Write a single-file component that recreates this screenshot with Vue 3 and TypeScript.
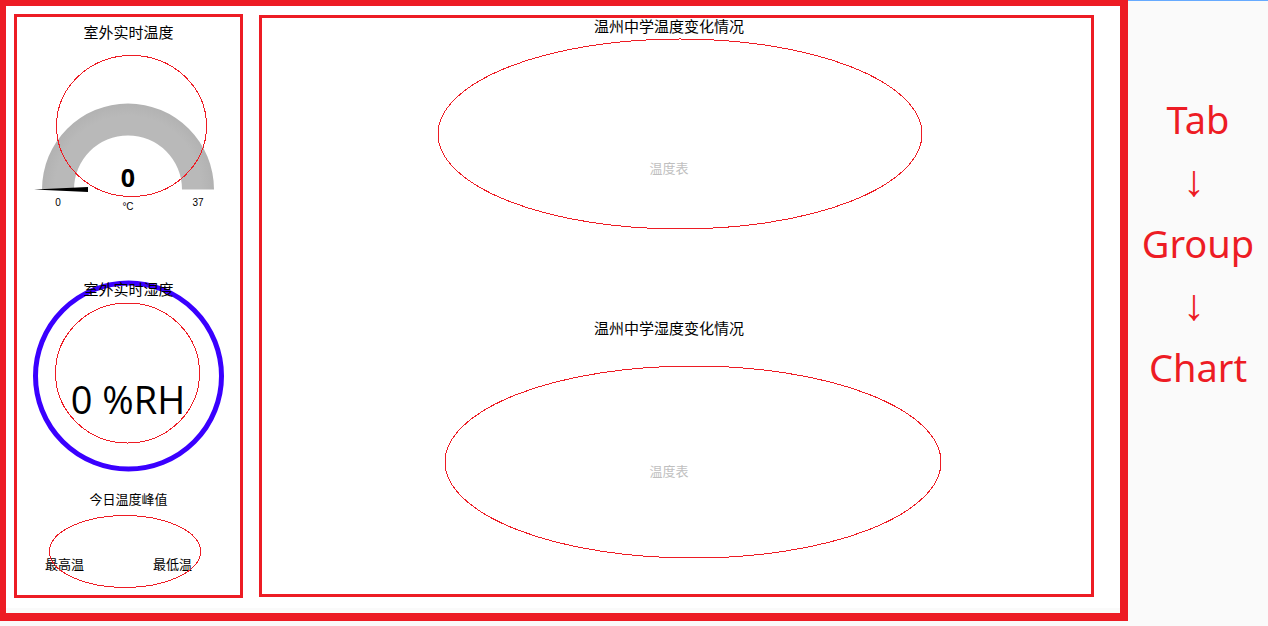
<script setup lang="ts">
interface Chart {
  title: string
  label: string
  height: number
  labelY: number
  ring: { cx: number; cy: number; rx: number; ry: number }
}

const charts: Chart[] = [
  { title: '温州中学温度变化情况', label: '温度表', height: 287, labelY: 140, ring: { cx: 291, cy: 101, rx: 242, ry: 95 } },
  { title: '温州中学湿度变化情况', label: '温度表', height: 259, labelY: 141, ring: { cx: 304, cy: 127, rx: 248, ry: 96 } },
]

const gauge = { value: 0, min: 0, max: 37, unit: '°C' }
const humidity = '0 %RH'
const legend: string[] = ['Tab', '↓', 'Group', '↓', 'Chart']
</script>

<template>
  <div class="page">
    <main class="tab">
      <div class="board">
        <section class="group readings">
          <h2>室外实时温度</h2>
          <svg class="gauge" viewBox="0 0 223 240" width="223" height="240">
            <defs>
              <radialGradient id="arc-shade" gradientUnits="userSpaceOnUse" cx="111" cy="149" r="86">
                <stop offset="0.62" stop-color="#b9b9b9" />
                <stop offset="0.85" stop-color="#b9b9b9" />
                <stop offset="1" stop-color="#b2b2b2" />
              </radialGradient>
            </defs>
            <path d="M25 149.500A86 86 0 0 1 197 149.500H165A54 54 0 0 0 57 149.500Z" fill="url(#arc-shade)" />
            <path d="M17 149.500L71 147V152Z" fill="#000" />
            <text class="value" x="111" y="147">{{ gauge.value }}</text>
            <text class="scale" x="41" y="166">{{ gauge.min }}</text>
            <text class="scale" x="111" y="170">{{ gauge.unit }}</text>
            <text class="scale" x="181" y="166">{{ gauge.max }}</text>
            <ellipse class="ring" cx="114.500" cy="86" rx="75" ry="70.500" />
          </svg>

          <div class="dial">
            <svg viewBox="0 0 223 192" width="223" height="192">
              <circle cx="111.500" cy="96" r="93" fill="none" stroke="#3a00ff" stroke-width="5" />
              <text class="humidity" x="111" y="134">{{ humidity }}</text>
              <ellipse class="ring" cx="110.500" cy="93" rx="72" ry="70" />
            </svg>
            <h2>室外实时湿度</h2>
          </div>

          <div class="peak">
            <h3>今日温度峰值</h3>
            <div class="extremes">
              <span>最高温</span>
              <span>最低温</span>
            </div>
            <svg viewBox="0 0 152 74" width="152" height="74" aria-hidden="true">
              <ellipse class="ring" cx="76" cy="36.500" rx="75.500" ry="36" />
            </svg>
          </div>
        </section>

        <section class="group charts">
          <article v-for="chart in charts" :key="chart.title">
            <h2>{{ chart.title }}</h2>
            <svg :viewBox="`0 0 560 ${chart.height}`" width="560" :height="chart.height">
              <text class="chart-label" x="280" :y="chart.labelY">{{ chart.label }}</text>
              <ellipse class="ring" v-bind="chart.ring" />
            </svg>
          </article>
        </section>
      </div>
    </main>

    <aside class="legend">
      <p v-for="(line, i) in legend" :key="i" :class="{ arrow: line === '↓' }">{{ line }}</p>
    </aside>
  </div>
</template>

<style>
body {
  background: #fafafa;
}
</style>

<style scoped>
.page {
  display: flex;
  align-items: stretch;
  min-height: 100vh;
  box-sizing: border-box;
  padding-bottom: 5px;
  background: #fafafa;
  color: #000;
  font-family: 'Noto Sans', 'Noto Sans CJK SC', sans-serif;
}

.tab {
  flex: 1;
  box-sizing: border-box;
  border: solid #ed1c24;
  border-width: 6px 8px 8px 6px;
}

.board {
  display: flex;
  gap: 16px;
  align-items: center;
  padding: 8px 26px 10px 8px;
  background: #fff;
}

.group {
  box-sizing: border-box;
  border: 3px solid #ed1c24;
}

.readings {
  flex: none;
  width: 229px;
  height: 584px;
  padding-top: 6px;
}

.charts {
  flex: 1;
  padding-right: 15px;
}

svg {
  display: block;
}

h2,
h3,
p {
  margin: 0;
  font-weight: 400;
  text-align: center;
}

h2 {
  font-size: 15px;
  line-height: 15px;
  font-family: 'Noto Sans CJK SC', sans-serif;
}

.readings > h2 {
  line-height: 17px;
}

.charts article {
  display: flex;
  flex-direction: column;
  align-items: center;
}

text {
  text-anchor: middle;
}

.ring {
  fill: none;
  stroke: #ed1c24;
  stroke-width: 1px;
  shape-rendering: crispEdges;
}

.value {
  font-size: 25px;
  font-weight: 700;
}

.scale {
  font-family: 'Liberation Sans', sans-serif;
  font-size: 10px;
}

.humidity {
  font-family: 'Open Sans', 'Noto Sans', sans-serif;
  font-size: 38px;
  font-weight: 400;
}

.chart-label {
  fill: #bfbfbf;
  font-family: 'Noto Sans CJK SC', sans-serif;
  font-size: 13px;
}

.dial {
  position: relative;
}

.dial h2 {
  position: absolute;
  top: 1px;
  left: 0;
  right: 0;
}

.peak {
  position: relative;
  padding-top: 17px;
  font-family: 'Noto Sans CJK SC', sans-serif;
  font-size: 13px;
  line-height: 20px;
}

.peak h3 {
  font-size: 13px;
}

.extremes {
  display: flex;
  justify-content: space-between;
  padding: 45px 48px 0 28px;
}

.peak svg {
  position: absolute;
  top: 43px;
  left: 32px;
}

.legend {
  flex: none;
  width: 140px;
  box-sizing: border-box;
  padding-top: 87px;
  border-top: 1px solid #66aaff;
  color: #ed1c24;
  font-size: 38px;
  line-height: 62px;
}

.arrow {
  padding-right: 8px;
  font-family: 'Liberation Sans', sans-serif;
  font-size: 44px;
  font-weight: 700;
}
</style>
